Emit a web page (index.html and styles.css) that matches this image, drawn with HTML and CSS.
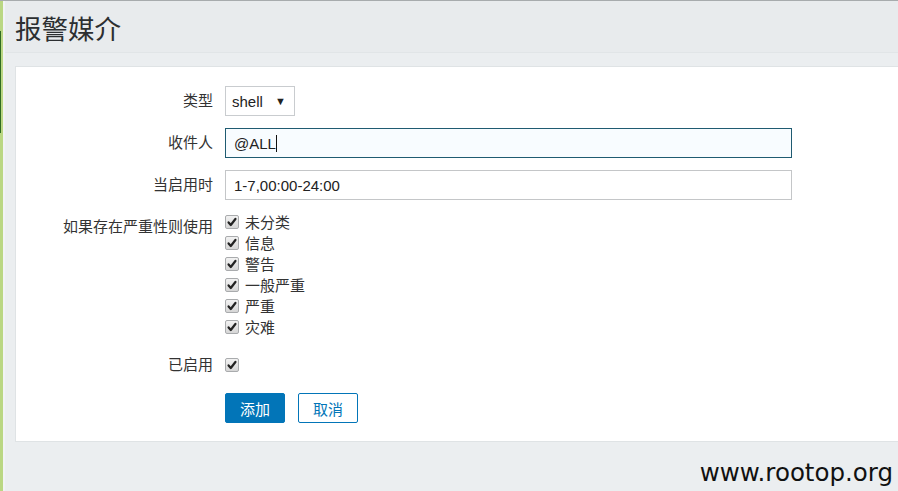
FILE: index.html
```html
<!DOCTYPE html>
<html lang="zh-CN">
<head>
    <meta charset="UTF-8">
    <title>报警媒介</title>
    <link rel="stylesheet" href="styles.css">
</head>
<body>
    <div class="frame">
        <div class="strip"></div>
        <div class="main">
            <div class="header">
                <h1>报警媒介</h1>
            </div>

            <div class="card">
                <div class="form-grid">
                    <div class="label">类型</div>
                    <div class="control">
                        <div class="select">
                            <span>shell</span>
                            <span class="arrow">&#9660;</span>
                        </div>
                    </div>

                    <div class="label">收件人</div>
                    <div class="control">
                        <div class="text-input focused">@ALL<span class="caret"></span></div>
                    </div>

                    <div class="label">当启用时</div>
                    <div class="control">
                        <div class="text-input">1-7,00:00-24:00</div>
                    </div>

                    <div class="label label-top">如果存在严重性则使用</div>
                    <div class="check-list">
                        <div class="check-item"><span class="box"><svg viewBox="0 0 14 14"><path d="M3 7.5 L5.6 10.5 L11 3.5" /></svg></span>未分类</div>
                        <div class="check-item"><span class="box"><svg viewBox="0 0 14 14"><path d="M3 7.5 L5.6 10.5 L11 3.5" /></svg></span>信息</div>
                        <div class="check-item"><span class="box"><svg viewBox="0 0 14 14"><path d="M3 7.5 L5.6 10.5 L11 3.5" /></svg></span>警告</div>
                        <div class="check-item"><span class="box"><svg viewBox="0 0 14 14"><path d="M3 7.5 L5.6 10.5 L11 3.5" /></svg></span>一般严重</div>
                        <div class="check-item"><span class="box"><svg viewBox="0 0 14 14"><path d="M3 7.5 L5.6 10.5 L11 3.5" /></svg></span>严重</div>
                        <div class="check-item"><span class="box"><svg viewBox="0 0 14 14"><path d="M3 7.5 L5.6 10.5 L11 3.5" /></svg></span>灾难</div>
                    </div>

                    <div class="label">已启用</div>
                    <div class="control">
                        <span class="box"><svg viewBox="0 0 14 14"><path d="M3 7.5 L5.6 10.5 L11 3.5" /></svg></span>
                    </div>

                    <div></div>
                    <div class="buttons">
                        <button class="btn btn-primary">添加</button>
                        <button class="btn btn-secondary">取消</button>
                    </div>
                </div>
            </div>
        </div>
    </div>
    <div class="watermark">www.rootop.org</div>
</body>
</html>
```

FILE: styles.css
```css
html, body {
    margin: 0;
    height: 100%;
}
body {
    font-family: "Liberation Sans", "Noto Sans CJK SC", sans-serif;
    font-size: 15px;
    color: #333;
    background-color: #ebeef0;
    border-top: 1px solid #a7abad;
    box-sizing: border-box;
    overflow: hidden;
    position: relative;
}
.frame {
    display: flex;
    min-height: 100%;
}
.strip {
    width: 3px;
    flex: none;
    background: linear-gradient(#2f6b22, #2f6b22) 0 30px / 1px 102px no-repeat, #bad783;
}
.main {
    flex: 1;
    border-left: 2px solid #f1f3f4;
}
.header {
    height: 51px;
    display: flex;
    align-items: center;
    padding-left: 10px;
    border-bottom: 1px solid #e1e5e7;
    background-color: #e8ebed;
}
.header h1 {
    margin: 0;
    font-size: 26.5px;
    font-weight: normal;
    color: #2c2f31;
    padding-top: 2px;
}
.card {
    margin: 13px 0 0 10px;
    background-color: white;
    border: 1px solid #dfe3e5;
    border-right: none;
    padding: 19px 0 18px;
}
.form-grid {
    display: grid;
    grid-template-columns: 197px 1fr;
    column-gap: 12px;
    row-gap: 12px;
}
.label {
    text-align: right;
    line-height: 30px;
    height: 30px;
}
.label-top {
    line-height: 21px;
    padding-top: 4px;
}
.control {
    display: flex;
    align-items: center;
    height: 30px;
}
.select {
    display: flex;
    align-items: center;
    justify-content: space-between;
    padding: 0 8px 0 6px;
    box-sizing: border-box;
    width: 70px;
    height: 30px;
    border: 1px solid #c9cccf;
    font-size: 15px;
    color: #222;
}
.arrow {
    font-size: 11px;
    color: #222;
}
.text-input {
    width: 567px;
    height: 30px;
    box-sizing: border-box;
    border: 1px solid #c4c6c8;
    padding: 0 8px;
    font-size: 15px;
    color: #222;
    display: flex;
    align-items: center;
}
.text-input.focused {
    border-color: #1f5b71;
    background-color: #f8fcff;
}
.caret {
    width: 1px;
    height: 17px;
    background-color: #111;
}
.check-list {
    display: flex;
    flex-direction: column;
    margin: -1px 0 1px;
}
.check-item {
    display: flex;
    align-items: center;
    height: 21px;
    gap: 6px;
}
.box {
    width: 14px;
    height: 14px;
    box-sizing: border-box;
    border: 1px solid #a9abad;
    border-radius: 2px;
    background: linear-gradient(#f2f2f2, #d6d6d6);
    display: inline-flex;
    flex: none;
}
.box svg {
    width: 12px;
    height: 12px;
}
.box path {
    fill: none;
    stroke: #222;
    stroke-width: 2.6;
    stroke-linecap: round;
    stroke-linejoin: round;
}
.buttons {
    display: flex;
    gap: 13px;
    padding-top: 1px;
}
.btn {
    width: 60px;
    height: 30px;
    font-family: "Noto Sans CJK SC", sans-serif;
    font-size: 15px;
    border-radius: 2px;
    cursor: pointer;
}
.btn-primary {
    background-color: #0275b8;
    border: 1px solid #0275b8;
    color: white;
}
.btn-secondary {
    background-color: white;
    border: 1px solid #0275b8;
    color: #0275b8;
}
.watermark {
    position: absolute;
    right: 5px;
    bottom: 4px;
    font-family: "DejaVu Sans", sans-serif;
    font-size: 24.5px;
    color: #111;
}
```
